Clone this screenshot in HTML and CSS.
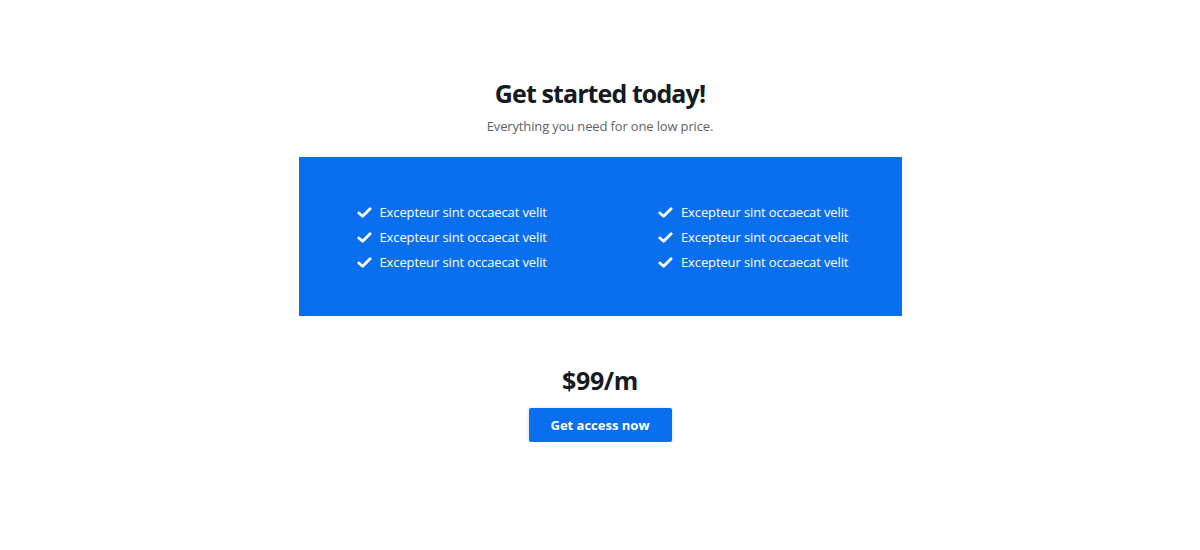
FILE: index.html
```html
<!DOCTYPE html>
<html>
<head>
<meta charset="utf-8">
<link rel="stylesheet" href="styles.css">
</head>
<body>
<section class="pricing">
  <h1 class="title">Get started today!</h1>
  <p class="subtitle">Everything you need for one low price.</p>
  <div class="features">
    <ul class="col">
      <li><svg class="check" viewBox="0 0 16 16"><path d="M2 8.5 L6 12 L14 4" /></svg>Excepteur sint occaecat velit</li>
      <li><svg class="check" viewBox="0 0 16 16"><path d="M2 8.5 L6 12 L14 4" /></svg>Excepteur sint occaecat velit</li>
      <li><svg class="check" viewBox="0 0 16 16"><path d="M2 8.5 L6 12 L14 4" /></svg>Excepteur sint occaecat velit</li>
    </ul>
    <ul class="col">
      <li><svg class="check" viewBox="0 0 16 16"><path d="M2 8.5 L6 12 L14 4" /></svg>Excepteur sint occaecat velit</li>
      <li><svg class="check" viewBox="0 0 16 16"><path d="M2 8.5 L6 12 L14 4" /></svg>Excepteur sint occaecat velit</li>
      <li><svg class="check" viewBox="0 0 16 16"><path d="M2 8.5 L6 12 L14 4" /></svg>Excepteur sint occaecat velit</li>
    </ul>
  </div>
  <div class="price">$99/m</div>
  <button class="cta">Get access now</button>
</section>
</body>
</html>
```
FILE: styles.css
```css
* { box-sizing: border-box; }
html, body { margin: 0; padding: 0; background: #fff; }
body { font-family: "Open Sans", "Noto Sans", sans-serif; color: #1a1d24; }
.pricing {
  display: flex;
  flex-direction: column;
  align-items: center;
  padding-top: 76px;
}
.title {
  margin: 0;
  font-size: 25px;
  line-height: 34px;
  font-weight: 700;
  color: #161a22;
  letter-spacing: -0.9px;
}
.subtitle {
  margin: 6px 0 0;
  font-size: 13px;
  line-height: 20px;
  color: #5f6368;
  letter-spacing: -0.15px;
}
.features {
  margin-top: 21px;
  width: 603px;
  background: #0a6fee;
  display: grid;
  grid-template-columns: 1fr 1fr;
  padding: 43px 0 41px;
}
.col {
  list-style: none;
  margin: 0;
  padding: 0 0 0 58px;
}
.col li {
  display: flex;
  align-items: center;
  color: #fff;
  font-size: 13px;
  line-height: 25px;
  letter-spacing: -0.12px;
}
.check {
  width: 15px;
  height: 15px;
  margin-right: 8px;
  fill: none;
  stroke: #fff;
  stroke-width: 3;
  stroke-linecap: round;
  stroke-linejoin: round;
}
.price {
  margin-top: 47px;
  font-size: 25px;
  line-height: 34px;
  font-weight: 700;
  color: #161a22;
  letter-spacing: -0.4px;
}
.cta {
  margin-top: 11px;
  width: 143px;
  height: 34px;
  border: none;
  border-radius: 2px;
  background: #0a6fee;
  color: #fff;
  font-family: "Open Sans", sans-serif;
  font-weight: 700;
  font-size: 13px;
  box-shadow: 0 1px 4px rgba(0,0,0,0.18);
  cursor: pointer;
}
```
